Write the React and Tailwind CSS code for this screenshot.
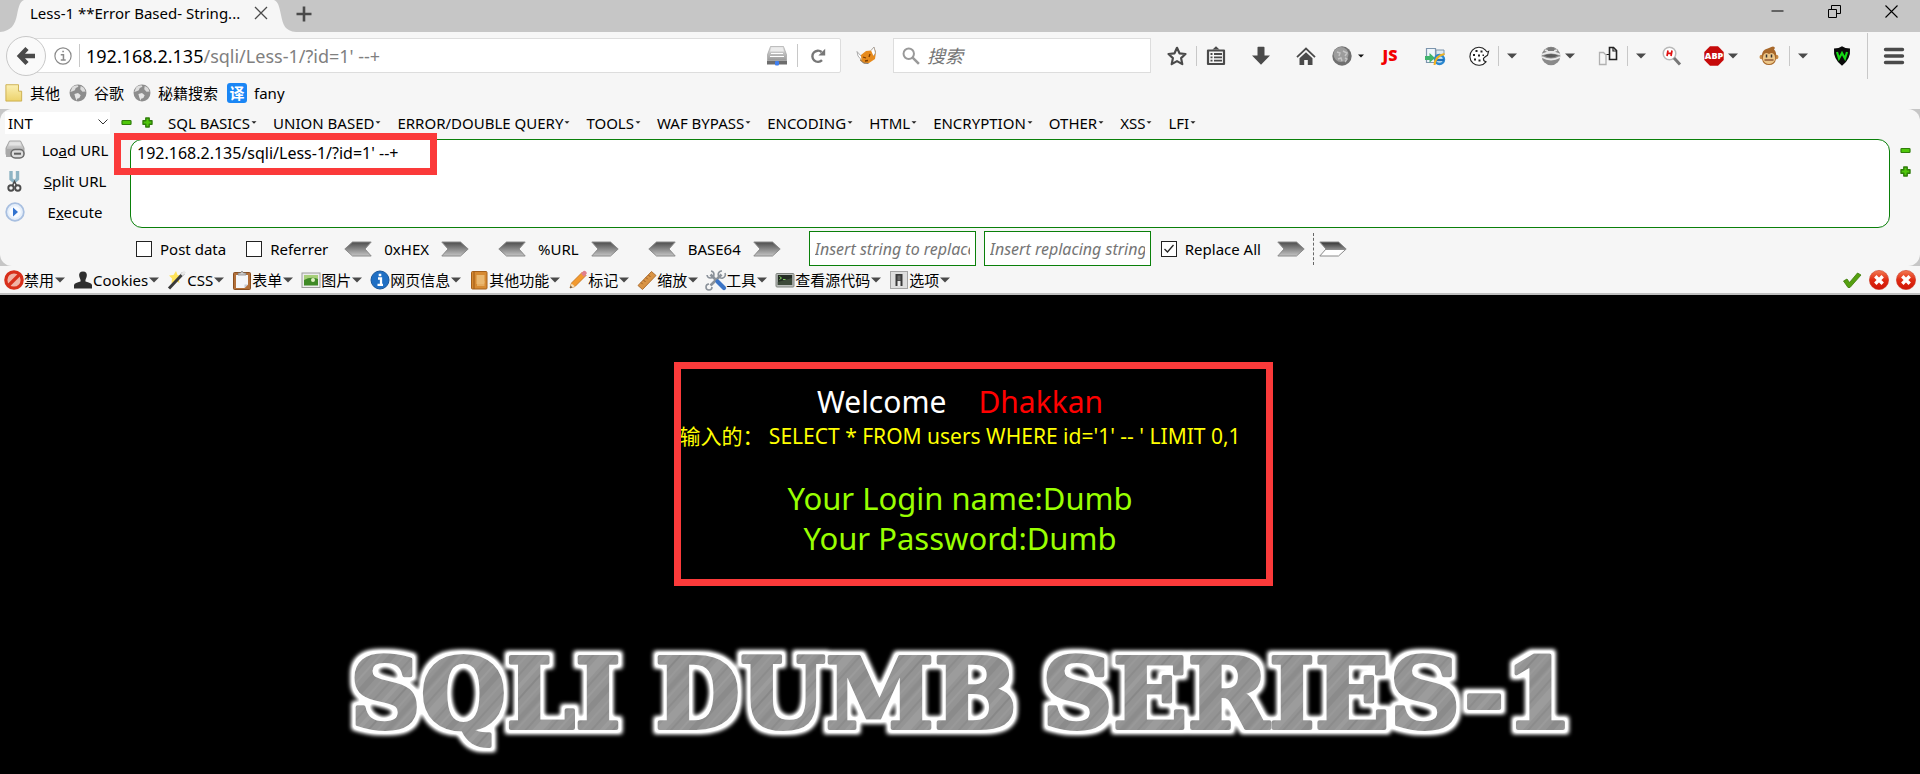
import React from "react";

const Icon = ({ children, className = "h-5 w-5", box = "0 0 20 20" }) => (
  <svg viewBox={box} className={"block shrink-0 overflow-visible " + className} fill="none" aria-hidden="true">
    {children}
  </svg>
);

const Caret = ({ className = "h-[6px] w-[10px]", fill = "#4a4a4a" }) => (
  <Icon box="0 0 10 6" className={className}>
    <path d="M0 0.5h10L5 5.5z" fill={fill} />
  </Icon>
);

const Globe = () => (
  <Icon className="h-[18px] w-[18px]">
    <circle cx="10" cy="10" r="9.4" fill="#8d8d8d" />
    <path d="M3.500 4C5 2.500 7 1.500 9.500 1.500l1 1.500-3 1.500-1 2.500L4 8 1.500 9z" fill="#dedede" />
    <path d="M6 11l4-1 3 2.500-1.500 3-2.500 1-.5 2L7 15z" fill="#e6e6e6" />
    <path d="M13 2.200l3.500 2 2 4-3.500.5-2.500-3z" fill="#dcdcdc" />
  </Icon>
);

const Plus = () => (
  <Icon box="0 0 11 11" className="h-[11px] w-[11px]">
    <path d="M3.800 1h3.400v2.800H10v3.400H7.200V10H3.800V7.200H1V3.800h2.800z" fill="#4fc70a" stroke="#2f7d0a" strokeWidth="1.400" strokeLinejoin="round" />
  </Icon>
);
const Minus = () => (
  <Icon box="0 0 11 11" className="h-[11px] w-[11px]">
    <rect x="1" y="3.500" width="9" height="4" rx="0.800" fill="#4fc70a" stroke="#2f7d0a" strokeWidth="1.200" />
  </Icon>
);

const Defs = () => (
  <svg className="absolute h-0 w-0" aria-hidden="true">
    <defs>
      <linearGradient id="steel" x1="0" y1="0" x2="0" y2="1">
        <stop offset="0" stopColor="#4c4c4c" />
        <stop offset="1" stopColor="#c4c4c4" />
      </linearGradient>
      <linearGradient id="steelLight" x1="0" y1="0" x2="0" y2="1">
        <stop offset="0" stopColor="#333333" />
        <stop offset="0.55" stopColor="#8f8f8f" />
        <stop offset="0.6" stopColor="#ffffff" />
        <stop offset="1" stopColor="#ffffff" />
      </linearGradient>
      <linearGradient id="folder" x1="0" y1="0" x2="0" y2="1">
        <stop offset="0" stopColor="#fbf0b4" />
        <stop offset="1" stopColor="#ecd26b" />
      </linearGradient>
      <linearGradient id="redBall" x1="0" y1="0" x2="0" y2="1">
        <stop offset="0" stopColor="#f47a52" />
        <stop offset="0.5" stopColor="#e02a12" />
        <stop offset="1" stopColor="#cf1507" />
      </linearGradient>
      <linearGradient id="greyBox" x1="0" y1="0" x2="0" y2="1">
        <stop offset="0" stopColor="#e6e6e6" />
        <stop offset="1" stopColor="#9b9b9b" />
      </linearGradient>
    </defs>
  </svg>
);

const ArrowRight = ({ light }) => (
  <Icon box="0 0 28 16" className="h-[16px] w-[28px]">
    <path d="M.8 1h18.700L27.200 8l-7.700 7H.8L7 8z" fill={light ? "url(#steelLight)" : "url(#steel)"} stroke="#8a8a8a" strokeWidth="1" />
  </Icon>
);
const ArrowLeft = () => (
  <Icon box="0 0 28 16" className="h-[16px] w-[28px]">
    <path d="M27.200 1H8.500L.8 8l7.700 7h18.700L21 8z" fill="url(#steel)" stroke="#8a8a8a" strokeWidth="1" />
  </Icon>
);

const ErrorBall = () => (
  <Icon>
    <circle cx="10" cy="10" r="9.600" fill="url(#redBall)" stroke="#c9301c" strokeWidth="0.600" />
    <path d="M6.300 6.300l7.400 7.400M13.700 6.300l-7.400 7.400" stroke="#fff" strokeWidth="3.400" />
  </Icon>
);

const Separator = ({ className }) => <span className={"w-px shrink-0 bg-[#c8c8c8] " + className} />;

const NavButton = ({ label, className, children }) => (
  <button type="button" aria-label={label} className={"flex shrink-0 items-center " + className}>
    {children}
  </button>
);

const TabStrip = () => (
  <header className="flex h-8 items-stretch justify-between bg-[#c6c6c6]">
    <div className="flex items-stretch">
      <Icon box="0 0 24 32" className="h-8 w-6">
        <path d="M0 32C11 31 15 25 17 15S20 2 24 0v32z" fill="#f6f6f6" />
      </Icon>
      <div className="flex w-[248px] items-center justify-between bg-[#f6f6f6] pb-[6px] pl-[6px] pr-1">
        <span className="whitespace-nowrap">Less-1 **Error Based- String...</span>
        <button type="button" aria-label="Close tab">
          <Icon box="0 0 14 14" className="h-[14px] w-[14px]">
            <path d="M1 1l12 12M13 1L1 13" stroke="#4a4a4a" strokeWidth="1.300" />
          </Icon>
        </button>
      </div>
      <Icon box="0 0 24 32" className="h-8 w-6">
        <path d="M24 32C13 31 11 25 9 15S6 2 2 0H0v32z" fill="#f6f6f6" />
      </Icon>
      <button type="button" aria-label="New tab" className="pb-[5px]">
        <Icon box="0 0 16 16" className="h-4 w-4">
          <path d="M8 .5v15M.5 8h15" stroke="#4a4a4a" strokeWidth="2.600" />
        </Icon>
      </button>
    </div>
    <div className="flex h-[22px] items-center gap-11 pr-[22px]">
      <button type="button" aria-label="Minimize">
        <Icon box="0 0 13 13" className="h-[13px] w-[13px]">
          <path d="M.5 6h12" stroke="#000" />
        </Icon>
      </button>
      <button type="button" aria-label="Restore">
        <Icon box="0 0 13 13" className="h-[13px] w-[13px]">
          <path d="M.5 4.500h8v8h-8zM3.500 4V.5h9v8H9" stroke="#000" />
        </Icon>
      </button>
      <button type="button" aria-label="Close window">
        <Icon box="0 0 13 13" className="h-[13px] w-[13px]">
          <path d="M.5.5l12 12M12.500.5l-12 12" stroke="#000" strokeWidth="1.100" />
        </Icon>
      </button>
    </div>
  </header>
);

const NavBar = () => (
  <nav className="flex h-[46px] items-center pl-[6px] pr-4 pt-px">
    <button type="button" aria-label="Back" className="z-10 flex h-10 w-10 shrink-0 items-center justify-center rounded-full border border-[#c8c8c8] bg-[#fafafa]">
      <Icon>
        <path d="M11 2.500L3.800 10l7.200 7.500M4.500 10h14.500" stroke="#4a4a4a" strokeWidth="4.400" />
      </Icon>
    </button>
    <div className="-ml-3 flex h-[35px] min-w-0 flex-1 items-center rounded-r-[2px] border border-[#dddddd] bg-white pl-[19px] pr-[13px]">
      <button type="button" aria-label="Site information">
        <Icon className="h-[18px] w-[18px]">
          <circle cx="10" cy="10" r="9" stroke="#8a8a8a" strokeWidth="1.300" />
          <path d="M7.500 8.500H10.500v6M7.500 14.500h5.500M9.200 5h1.800" stroke="#8a8a8a" strokeWidth="1.700" />
        </Icon>
      </button>
      <Separator className="ml-[7px] h-[23px]" />
      <div className="ml-[6px] flex-1 whitespace-nowrap text-[18px]" role="textbox" aria-label="Address">
        192.168.2.135<span className="text-[#808080]">/sqli/Less-1/?id=1' --+</span>
      </div>
      <button type="button" aria-label="Proxy">
        <Icon>
          <path d="M3.500.5h13l3 8v5.500H.5V8.500z" fill="url(#greyBox)" stroke="#9a9a9a" strokeWidth="0.600" />
          <path d="M4.500 1.500h11l1.500 4h-14z" fill="#ececec" />
          <path d="M4 7.500h12M3 10.500h14" stroke="#fff" strokeWidth="1" />
          <path d="M0 14.500h20v4H0z" fill="#6d6d6d" />
          <rect x="8" y="15" width="4" height="4.500" rx="1" fill="#3f7ff0" />
        </Icon>
      </button>
      <Separator className="ml-[10px] h-[23px]" />
      <button type="button" aria-label="Reload" className="ml-3 mr-px">
        <Icon className="h-4 w-4">
          <path d="M15 15.200A7 7 0 1 1 14.500 5" stroke="#777" strokeWidth="3" />
          <path d="M19 1v8.500h-8.500z" fill="#777" />
        </Icon>
      </button>
    </div>
    <NavButton label="Fox" className="ml-4 w-5">
      <Icon>
        <path d="M4 9l5-4 5-.500L17 1l2 5-1 7-6 4-5 .5-4-3z" fill="#e68a1c" />
        <path d="M14 4.500L17 1l1.500 6-2 3M4 10L0 5.500 1 10l3.500 4" fill="#fff" stroke="#999" strokeWidth="0.800" />
        <path d="M3.500 14l3 3 5 .5" stroke="#777" strokeWidth="1" />
        <path d="M6 11l3 1M13 8l-1 3M8 15l3-.500" stroke="#7c3c00" strokeWidth="1.300" />
      </Icon>
    </NavButton>
    <div className="ml-4 flex h-[35px] w-[258px] shrink-0 items-center gap-[7px] border border-[#dddddd] bg-white pl-2">
      <Icon className="h-[18px] w-[18px]">
        <circle cx="7.500" cy="7.500" r="5.800" stroke="#999" strokeWidth="2.200" />
        <path d="M11.800 11.800l7 7" stroke="#999" strokeWidth="2.800" />
      </Icon>
      <input aria-label="Search" placeholder="搜索" className="w-full bg-transparent text-[18px] outline-none placeholder:italic placeholder:text-[#757575]" />
    </div>

    <NavButton label="Bookmark" className="ml-4 w-5">
      <Icon>
        <path d="M10 1.800l2.500 5.500 6 .7-4.400 4.100 1.200 6L10 15.100l-5.300 3 1.200-6L1.500 8l6-.7z" stroke="#4a4a4a" strokeWidth="2.200" strokeLinejoin="round" />
      </Icon>
    </NavButton>
    <Separator className="ml-[9px] h-5" />
    <NavButton label="Bookmarks list" className="ml-[9px] w-5">
      <Icon>
        <path d="M2 4.500h16v13.500H2z" stroke="#4a4a4a" strokeWidth="2.200" strokeLinejoin="round" />
        <path d="M6.500 3.500L10 .3l3.500 3.200z" fill="#4a4a4a" />
        <path d="M4.500 8h2M8 8h8M4.500 11.300h2M8 11.300h8M4.500 14.600h2M8 14.600h8" stroke="#4a4a4a" strokeWidth="1.800" />
      </Icon>
    </NavButton>
    <NavButton label="Downloads" className="ml-[25px] w-5">
      <Icon>
        <path d="M6.500 1.500q0-.8.800-.8h5.400q.8 0 .8.800V9.500H19L10 18.800 1 9.500h5.500z" fill="#4a4a4a" />
      </Icon>
    </NavButton>
    <NavButton label="Home" className="ml-[25px] w-5">
      <Icon>
        <path d="M10 6.200l6.500 6V19h-4.700v-5H8.200v5H3.500v-6.800z" fill="#4a4a4a" />
        <path d="M1 11.200l9-8.700 9 8.700" stroke="#4a4a4a" strokeWidth="1.800" />
      </Icon>
    </NavButton>
    <NavButton label="Proxy menu" className="ml-4 w-8 gap-[6px]">
      <Icon>
        <circle cx="10" cy="10" r="9.700" fill="#6f6f6f" />
        <circle cx="9" cy="8.500" r="7.500" fill="#9c9c9c" />
        <path d="M5 6l3 1-1 3M11 5l4 2-2 3M6 13l3-1 1 3M13 12l2 1-2 3" stroke="#c4c4c4" strokeWidth="1.400" />
      </Icon>
      <Caret className="h-1 w-[6px]" fill="#111" />
    </NavButton>
    <NavButton label="JavaScript" className="ml-4 w-5">
      <Icon>
        <text x="10" y="15" textAnchor="middle" fontFamily="Open Sans, sans-serif" fontWeight="800" fontSize="16" fill="#f20000">JS</text>
      </Icon>
    </NavButton>
    <NavButton label="Open in other browser" className="ml-[25px] w-5">
      <Icon>
        <path d="M1.500 2.500h9v14h-9z" fill="#eef5fb" stroke="#7c95ad" strokeWidth="1.200" />
        <path d="M11 4h8v5h-8z" fill="#dde8f0" stroke="#7c95ad" strokeWidth="1" />
        <circle cx="14.500" cy="13.500" r="4.500" fill="#bfe0f7" stroke="#2a87cf" strokeWidth="2.400" />
        <path d="M11 14h8" stroke="#1f6fb8" strokeWidth="2.200" />
        <path d="M9.500 19Q10 10 19.500 8" stroke="#f0b020" strokeWidth="2" />
        <path d="M0 10h4.500V7L10 12l-5.500 4.800V14H0z" fill="#3fb36c" />
      </Icon>
    </NavButton>
    <NavButton label="Cookies" className="ml-6 w-5">
      <Icon>
        <path d="M16.500 4.200A9 9 0 1 0 17 15.800q-3-.8-2.500-3.500 1.500-1.500 4-3l1-3.800q-1.500 1-3-1.300z" fill="#fff" stroke="#222" strokeWidth="1.100" />
        <path d="M6.500 4h2v2h-2zM11.500 4.500h2v2h-2zM4 8h2v2H4zM9 8.500h2v2H9zM5 12.500h2v2H5zM9.500 13.500h2v2h-2zM13.500 8.500h1.500v1.500h-1.500z" fill="#222" />
      </Icon>
    </NavButton>
    <Separator className="ml-[9px] h-5" />
    <NavButton label="Cookies menu" className="ml-2 w-[10px]"><Caret /></NavButton>
    <NavButton label="Agent" className="ml-6 w-[34px] gap-1">
      <Icon>
        <circle cx="10" cy="10" r="9.300" fill="#8a8a8a" />
        <path d="M4 4q6 3.500 12 0M1 8.500q9-4 18 0M1 11q9 5 18 0" stroke="#e8e8e8" strokeWidth="1.800" />
        <path d="M3 9.500q7-3 14 0-7 4-14 0z" fill="#5b5b5b" />
        <path d="M7 1.500h6v3.500H7z" fill="#7b7b7b" />
      </Icon>
      <Caret />
    </NavButton>
    <NavButton label="Pages" className="ml-[23px] w-5">
      <Icon>
        <path d="M1.500 6.500h4l2.500 2.500v9.500H1.500z" fill="#f6f6f6" stroke="#b0b0b0" strokeWidth="1.300" />
        <path d="M11.500 1.500h4l3 3v9h-7z" fill="#f6f6f6" stroke="#222" strokeWidth="1.600" />
        <path d="M15 1.500v3.500h3.500M8.500 8.500h3" stroke="#222" strokeWidth="1.200" />
      </Icon>
    </NavButton>
    <Separator className="ml-[9px] h-5" />
    <NavButton label="Pages menu" className="ml-2 w-[10px]"><Caret /></NavButton>
    <NavButton label="Header search" className="ml-4 w-5">
      <Icon>
        <circle cx="7.500" cy="7.500" r="6.300" fill="#fff" stroke="#b9b9b9" strokeWidth="1.500" />
        <path d="M12 12l6 6.500" stroke="#777" strokeWidth="3" />
        <path d="M6 4.500L5 10M10 4.500L9 10M5.500 7.300h4" stroke="#e01010" strokeWidth="1.700" />
      </Icon>
    </NavButton>
    <NavButton label="Adblock Plus" className="ml-[22px] w-[34px] gap-1">
      <Icon>
        <path d="M6 .3h8L19.700 6v8L14 19.700H6L.3 14V6z" fill="#c60a0a" />
        <text x="10" y="13.300" textAnchor="middle" fontFamily="Open Sans, sans-serif" fontWeight="800" fontSize="9" fill="#fff">ABP</text>
      </Icon>
      <Caret />
    </NavButton>
    <NavButton label="Greasemonkey" className="ml-[21px] w-5">
      <Icon>
        <circle cx="2.800" cy="11" r="2.300" fill="#c98b45" />
        <circle cx="17.200" cy="11" r="2.300" fill="#c98b45" />
        <path d="M10 2q5-3 6 0-1 1-1 1.500 3 2.500 2 9.500-1 6-7 6t-7-6Q2 6 6 3.500 8 2.500 10 2z" fill="#a8682a" />
        <path d="M4.500 9q2-3.500 5.500-1 3.500-2.500 5.500 1 1 3 .5 5-2 4-6 4t-6-4q-.5-2 .500-5z" fill="#ecc688" />
        <path d="M7.500 8.500v3M12.500 8.500v3" stroke="#333" strokeWidth="1.500" />
        <path d="M5.500 14h9" stroke="#7b3d20" strokeWidth="1.200" />
      </Icon>
    </NavButton>
    <Separator className="ml-[10px] h-5" />
    <NavButton label="Greasemonkey menu" className="ml-2 w-[10px]"><Caret /></NavButton>
    <NavButton label="Shield" className="ml-6 w-5">
      <Icon>
        <path d="M10 .3Q13 2.500 18 2.500 19 13 10 19.800 1 13 2 2.500 7 2.500 10 .3z" fill="#0a0a0a" />
        <path d="M5 6l2 6.500L10 7l3 5.500L15 6" stroke="#16d816" strokeWidth="2.200" />
      </Icon>
    </NavButton>
    <Separator className="ml-[15px] h-[46px]" />
    <NavButton label="Menu" className="ml-4 w-5">
      <Icon>
        <path d="M1.500 3.500h17M1.500 10h17M1.500 16.500h17" stroke="#4a4a4a" strokeWidth="3.400" strokeLinecap="round" />
      </Icon>
    </NavButton>
  </nav>
);

const Bookmarks = () => (
  <div className="flex h-[31px] items-center gap-[9px] pb-px pl-[5px]">
    <a href="#other" className="flex items-center gap-[7px]">
      <Icon className="h-[18px] w-[18px]">
        <path d="M1 .8h14V8h3.500v11H1z" fill="url(#folder)" stroke="#c9ac4a" strokeWidth="1" strokeLinejoin="round" />
      </Icon>
      其他
    </a>
    <a href="#google" className="flex items-center gap-[7px]"><Globe />谷歌</a>
    <a href="#secret" className="flex items-center gap-[7px]"><Globe />秘籍搜索</a>
    <a href="#fany" className="flex items-center gap-[7px]">
      <span className="flex h-5 w-5 items-center justify-center rounded-[3px] bg-[#1a86f5] text-[15px] font-bold leading-5 text-white">译</span>
      fany
    </a>
  </div>
);

const menus = ["SQL BASICS", "UNION BASED", "ERROR/DOUBLE QUERY", "TOOLS", "WAF BYPASS", "ENCODING", "HTML", "ENCRYPTION", "OTHER", "XSS", "LFI"];

const Codec = ({ name }) => (
  <div className="flex items-center gap-3">
    <button type="button" aria-label={"Decode " + name}><ArrowLeft /></button>
    <span>{name}</span>
    <button type="button" aria-label={"Encode " + name}><ArrowRight /></button>
  </div>
);

const Check = ({ id, label, checked }) => (
  <label htmlFor={id} className="flex items-center gap-2 whitespace-nowrap">
    <span className="relative flex h-4 w-4">
      <input id={id} type="checkbox" defaultChecked={checked} className="peer h-4 w-4 appearance-none border border-[#222] bg-white" />
      <svg viewBox="0 0 16 16" className="pointer-events-none absolute inset-0 hidden h-4 w-4 peer-checked:block" fill="none">
        <path d="M3.500 8l3 3 6-7" stroke="#222" strokeWidth="1.300" />
      </svg>
    </span>
    {label}
  </label>
);

const SideButton = ({ icon, children }) => (
  <button type="button" className="flex h-[31px] w-full items-center">
    {icon}
    <span className="ml-[15px] w-[70px] text-center">{children}</span>
  </button>
);

const HackBar = () => (
  <section className="bg-[#c6c6c6]">
    <div className="rounded-xl bg-[#f6f6f6] pt-[2px]">
      <div className="flex h-[23px] items-center whitespace-nowrap pl-[5px]">
        <div className="relative h-[22px] w-[105px]">
          <select aria-label="Mode" className="h-full w-full appearance-none bg-white pl-[3px] leading-5 outline-none">
            <option>INT</option>
          </select>
          <Icon box="0 0 10 6" className="pointer-events-none absolute right-[2px] top-[7px] h-[6px] w-[10px]">
            <path d="M.5.5L5 5 9.500.5" stroke="#333" />
          </Icon>
        </div>
        <button type="button" aria-label="Shrink" className="ml-[11px]"><Minus /></button>
        <button type="button" aria-label="Grow" className="ml-[10px]"><Plus /></button>
        <div className="ml-[15px] flex gap-4">
          {menus.map((m) => (
            <button type="button" key={m} className="flex items-center gap-px">
              {m}
              <Caret className="h-[3px] w-[6px]" fill="#222" />
            </button>
          ))}
        </div>
      </div>
      <div className="flex pl-[5px] pt-[5px]">
        <div className="-mt-[5px] w-[125px] shrink-0">
          <SideButton
            icon={
              <Icon>
                <path d="M4.500 1h11l3.500 7v6.500H1V8z" fill="url(#greyBox)" stroke="#8f8f8f" strokeWidth="0.800" />
                <path d="M5 2.500h10l1 3H4z" fill="#e4e4e4" />
                <path d="M1 9h18v8H1z" fill="#a9a9a9" />
                <rect x="6" y="9.500" width="13" height="8.500" rx="4.200" fill="#dcdcdc" stroke="#6a6a6a" strokeWidth="1.500" />
                <path d="M9 13.700h7" stroke="#5f5f5f" strokeWidth="2" />
              </Icon>
            }
          >
            Lo<u>a</u>d URL
          </SideButton>
          <SideButton
            icon={
              <Icon>
                <path d="M6 0v8l3.500 3M12.500 0v8L9 11" stroke="#8fb4c4" strokeWidth="3.400" />
                <circle cx="6" cy="17" r="2.700" stroke="#4c4c4c" strokeWidth="1.900" />
                <circle cx="12.800" cy="17" r="2.700" stroke="#4c4c4c" strokeWidth="1.900" />
                <path d="M7.500 14.500l2-4 2 4" stroke="#4c4c4c" strokeWidth="1.600" />
              </Icon>
            }
          >
            <u>S</u>plit URL
          </SideButton>
          <SideButton
            icon={
              <Icon>
                <circle cx="10" cy="10" r="8.800" fill="#e6effa" stroke="#a8bfe0" strokeWidth="1.800" />
                <circle cx="10" cy="10" r="5.800" fill="#f8fbff" />
                <path d="M8 5.500L13 10l-5 4.500z" fill="#3273cf" />
              </Icon>
            }
          >
            E<u>x</u>ecute
          </SideButton>
        </div>
        <div className="relative flex flex-1">
          <textarea
            aria-label="URL"
            defaultValue="192.168.2.135/sqli/Less-1/?id=1' --+"
            className="h-[89px] w-full resize-none rounded-xl border border-[#0a800a] bg-white px-[6px] py-[3px] text-[16px] leading-5 outline-none"
          />
          <div className="pointer-events-none absolute -left-4 -top-[6px] h-[42px] w-[323px] border-[7px] border-[#fb3a3a]" />
        </div>
        <div className="flex w-[30px] shrink-0 flex-col items-center gap-[10px] pl-px pt-[6px]">
          <button type="button" aria-label="Shrink field"><Minus /></button>
          <button type="button" aria-label="Grow field"><Plus /></button>
        </div>
      </div>
      <div className="mt-[3px] flex h-[35px] items-center pl-[136px]">
        <Check id="post" label="Post data" />
        <div className="ml-5"><Check id="ref" label="Referrer" /></div>
        <div className="ml-4 flex gap-[29px]">
          <Codec name="0xHEX" />
          <Codec name="%URL" />
          <Codec name="BASE64" />
        </div>
        <input aria-label="String to replace" placeholder="Insert string to replace" className="ml-7 h-[35px] w-[167px] border border-[#0a800a] bg-white px-[5px] text-[16px] outline-none placeholder:italic placeholder:text-[#757575]" />
        <input aria-label="Replacing string" placeholder="Insert replacing string" className="ml-2 h-[35px] w-[167px] border border-[#0a800a] bg-white px-[5px] text-[16px] outline-none placeholder:italic placeholder:text-[#757575]" />
        <div className="ml-[10px]"><Check id="all" label="Replace All" checked /></div>
        <button type="button" aria-label="Replace" className="ml-4"><ArrowRight /></button>
        <span className="ml-2 h-8 border-l border-dashed border-[#666]" />
        <button type="button" aria-label="Apply" className="ml-[5px]"><ArrowRight light /></button>
      </div>
    </div>
  </section>
);

const tools = [
  ["禁用", <><circle cx="10" cy="10" r="8.200" fill="#f0b4a8" stroke="#d8301c" strokeWidth="3.200" /><path d="M4.500 15.500l11-11" stroke="#d8301c" strokeWidth="3.200" /></>],
  ["Cookies", <path d="M10 1.500c3 0 4.200 2 3.800 4.500-.5 2.500-1.800 3.500-1.300 5.500 3.500 1 6 1.500 6.500 3.500v3.500H1V15c.5-2 3-2.500 6.500-3.500.5-2-.8-3-1.300-5.500C5.800 3.500 7 1.500 10 1.500z" fill="#2e2e2e" />],
  ["CSS", <><path d="M9 1l1.500 4 4 .5-3 3 1 4.500-4-2-4 2.500.5-5-3-3 4.500-.5z" fill="#ffe35a" /><path d="M2 18.500L16.500 3" stroke="#3a3a3a" strokeWidth="3" /><path d="M14.500 5L18 1.500" stroke="#e8e8e8" strokeWidth="3" /></>],
  ["表单", <><rect x="1.500" y="2.500" width="17" height="17" rx="1" fill="#b3703a" stroke="#8a4f20" /><path d="M4 5h12v9.500L12.500 18H4z" fill="#f4f6f9" /><path d="M16 14.500h-3.500V18z" fill="#c3c9d4" /><path d="M6 5V3h2.500l1.500-2 1.500 2H14v2z" fill="#cfcfcf" stroke="#777" strokeWidth="0.700" /></>],
  ["图片", <><rect x="1" y="3" width="18" height="14.500" fill="#ededed" stroke="#9c9c9c" /><rect x="3" y="5" width="14" height="10.500" fill="#3f8a26" /><path d="M3 5h14v4Q10 6 3 10z" fill="#a7cf7a" /><circle cx="12" cy="10" r="2" fill="#dff0c2" /></>],
  ["网页信息", <><circle cx="10" cy="10" r="9" fill="#1f6fc4" stroke="#17579d" /><path d="M8 8.500h3v6M7.500 14.800h5.500M8.700 5h2.600" stroke="#fff" strokeWidth="2.300" /></>],
  ["其他功能", <><rect x="2.500" y="1.500" width="15.500" height="17.500" rx="1" fill="#d68a32" stroke="#a5601a" /><path d="M5 1.500V19" stroke="#a5601a" strokeWidth="1.200" /><path d="M7.500 5h8v9h-8z" fill="#eab870" /><path d="M8 12h7.500M8 15h7.500" stroke="#eab870" strokeWidth="1.300" /></>],
  ["标记", <><path d="M2 18l1.500-5L14.500 2l3.500 3.500L7 16.500z" fill="#f39a2e" stroke="#c06d16" strokeWidth="0.800" /><path d="M13 3.500L15.500 1q1-.8 2.500.5 1.500 1.500.5 2.500L16 7z" fill="#e07f8c" /><path d="M2 18l1.500-4.500L7 16.500z" fill="#f7dfb8" /><path d="M2 18l.8-2 1.400 1.300z" fill="#222" /></>],
  ["缩放", <><path d="M1 15.500L14.500 1.500 19 5.500 5.500 19.500z" fill="#d99445" stroke="#a9692a" strokeWidth="0.900" /><path d="M4 12.500l1.700 1.700M6.500 10l2 2M9 7.500l1.700 1.700M11.500 5l2 2" stroke="#8f5520" strokeWidth="0.900" /></>],
  ["工具", <><path d="M4.500 4.500l11 11" stroke="#8b929a" strokeWidth="2.600" /><path d="M15.500 4.500l-11 11" stroke="#8b929a" strokeWidth="2.600" /><path d="M19 3a3.600 3.600 0 1 1-3-2M5 1a3.500 3.500 0 1 1-4 4M3 14a3 3 0 1 0 3 3" stroke="#8b929a" strokeWidth="1.600" /><path d="M11.500 11.500l6.500 6.500" stroke="#3b74c6" strokeWidth="4.200" strokeLinecap="round" /></>],
  ["查看源代码", <><rect x="1" y="3.500" width="18" height="13.500" rx="1" fill="#b9bcb9" stroke="#808580" /><rect x="2.800" y="5" width="14.400" height="10" fill="#232c23" /><path d="M2.800 12L17 8v7H2.800z" fill="#3d4a3a" /><path d="M4.500 6.500l2 1.500-2 1.500M8 9.500h2.500" stroke="#7fd060" strokeWidth="1" /></>],
  ["选项", <><rect x="1.500" y="1.500" width="17" height="17" fill="#dedede" stroke="#a5a5a5" /><rect x="6.500" y="4" width="7" height="12" fill="#3a3a3a" /><path d="M8.500 11h3v5h-3z" fill="#e9e9e9" /><path d="M8.500 5.500h3v5h-3z" fill="#6a6a6a" /></>],
];

const WebDeveloper = () => (
  <div className="flex h-[29px] items-center justify-between whitespace-nowrap border-b-2 border-[#c0c0c0] bg-[#f6f6f6] pl-1 pr-1">
    <div className="flex gap-2">
      {tools.map(([name, art]) => (
        <button type="button" key={name} className="flex items-center">
          <Icon>{art}</Icon>
          {name}
          <Caret className="ml-px h-[6px] w-[10px]" />
        </button>
      ))}
    </div>
    <div className="flex items-center gap-[7px]">
      <button type="button" aria-label="Valid">
        <Icon>
          <path d="M1.500 11l3.500-2 2.500 3.500L15.500 3l3.500 2L8 17.500H6z" fill="#55a010" stroke="#3c7a08" strokeWidth="0.800" />
        </Icon>
      </button>
      <button type="button" aria-label="CSS errors"><ErrorBall /></button>
      <button type="button" aria-label="Script errors"><ErrorBall /></button>
    </div>
  </div>
);

const strokes = [
  [2, "#fff", 0.1, 1], [9, "#000", 0.05, 5], [14, "#fff", 0.1, 1], [21, "#000", 0.1, 1], [30, "#fff", 0.07, 8],
  [38, "#000", 0.1, 1], [45, "#fff", 0.12, 1], [54, "#000", 0.06, 6], [63, "#fff", 0.1, 1], [70, "#000", 0.1, 1],
  [78, "#fff", 0.08, 4], [86, "#000", 0.08, 2],
];

const Logo = () => (
  <svg viewBox="0 0 1260 130" className="mx-auto block w-[1260px] max-w-full overflow-visible" role="img" aria-label="SQLI DUMB SERIES-1">
    <defs>
      <pattern id="brushed" width="91" height="400" patternUnits="userSpaceOnUse" patternTransform="rotate(42)">
        <rect width="91" height="400" fill="#949494" />
        {strokes.map(([x, c, o, w]) => (
          <path key={x} d={`M${x} 0v400`} stroke={c} strokeOpacity={o} strokeWidth={w} />
        ))}
      </pattern>
      <filter id="halo" x="-2%" y="-20%" width="104%" height="140%">
        <feMorphology in="SourceAlpha" operator="dilate" radius="4" result="fat" />
        <feGaussianBlur in="fat" stdDeviation="2" result="soft" />
        <feComponentTransfer in="soft" result="edge">
          <feFuncR type="linear" slope="0" intercept="1" />
          <feFuncG type="linear" slope="0" intercept="1" />
          <feFuncB type="linear" slope="0" intercept="1" />
          <feFuncA type="linear" slope="1.300" />
        </feComponentTransfer>
        <feMerge>
          <feMergeNode in="edge" />
          <feMergeNode in="SourceGraphic" />
        </feMerge>
      </filter>
    </defs>
    <text y="84" fontFamily="DejaVu Serif, serif" fontWeight="700" fontSize="98" fill="url(#brushed)" stroke="url(#brushed)" strokeWidth="4" strokeLinejoin="round" filter="url(#halo)">
      <tspan x="20">SQLI</tspan>
      <tspan x="325">DUMB</tspan>
      <tspan x="712">SERIES-1</tspan>
    </text>
  </svg>
);

export default function App() {
  return (
    <div className="min-h-screen bg-black font-['Noto_Sans','Noto_Sans_CJK_SC',sans-serif] text-[15px] leading-5 text-black">
      <Defs />
      <div className="bg-[#f6f6f6]">
        <TabStrip />
        <NavBar />
        <Bookmarks />
        <HackBar />
        <WebDeveloper />
      </div>
      <main className="pt-[67px]">
        <div className="relative mx-auto h-[224px] w-[572px] whitespace-nowrap pt-[20px] text-center">
          <div className="pointer-events-none absolute left-0 top-0 h-[224px] w-[599px] border-[7px] border-[#fb3a3a]" />
          <p className="text-[30px] leading-10 text-white">
            Welcome<span className="ml-8 text-[#ff0000]">Dhakkan</span>
          </p>
          <p className="text-[21px] leading-7 text-[#ffff00]">
            输入的： SELECT * FROM users WHERE id='1' -- ' LIMIT 0,1
          </p>
          <p className="mt-7 text-[31px] leading-10 text-[#99ff00]">
            Your Login name:Dumb
            <br />
            Your Password:Dumb
          </p>
        </div>
        <h1 className="mt-[58px]">
          <Logo />
        </h1>
      </main>
    </div>
  );
}
